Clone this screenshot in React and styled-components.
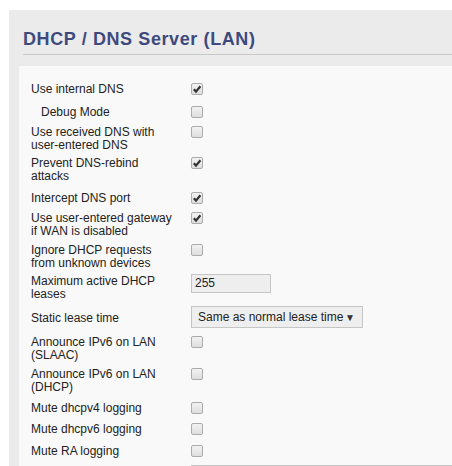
import React from 'react';
import styled, { createGlobalStyle } from 'styled-components';

const GlobalStyle = createGlobalStyle`
  body {
    margin: 0;
    background: #ffffff;
    font-family: "Liberation Sans", Arial, sans-serif;
  }
`;

const Page = styled.div`
  padding: 10px 0 0 9px;
  height: 456px;
  overflow: hidden;
`;

const Section = styled.div`
  background: #ebebeb;
  padding: 0 0 0 10px;
  min-height: 456px;
`;

const Heading = styled.h2`
  margin: 0 0 11px 4px;
  padding: 18px 0 4px 0;
  font-size: 18px;
  line-height: 22px;
  font-weight: bold;
  letter-spacing: 0.6px;
  color: #3e4a7e;
  border-bottom: 1px solid #c9c9c9;
`;

const Panel = styled.div`
  background: #f9f9f9;
  padding: 13px 0 0 12px;
  min-height: 400px;
`;

const Row = styled.div`
  display: grid;
  grid-template-columns: 160px 1fr;
  height: ${props => props.h}px;
`;

const Label = styled.div`
  padding: ${props => props.pad}px 0 0 ${props => props.indent ? 10 : 0}px;
  font-size: 12px;
  line-height: 13px;
  color: #222222;
`;

const Cell = styled.div`
  padding-top: ${props => props.pad}px;
`;

const Box = styled.span`
  display: block;
  width: 10px;
  height: 10px;
  border: 1px solid #acacac;
  border-radius: 2px;
  background: linear-gradient(#f2f2f2, #dedede);
  position: relative;
`;

const TextInput = styled.div`
  box-sizing: border-box;
  width: ${props => props.w}px;
  height: ${props => props.ht}px;
  border: 1px solid #c6c6c6;
  background: #eeeeee;
  padding: 0 0 0 3px;
  font-size: 12px;
  line-height: 17px;
  color: #222222;
`;

const Select = styled.div`
  box-sizing: border-box;
  width: 172px;
  height: 22px;
  border: 1px solid #c6c6c6;
  background: #eeeeee;
  display: flex;
  align-items: center;
  justify-content: space-between;
  padding: 0 7px 0 6px;
  font-size: 12px;
  color: #222222;
`;

const Arrow = styled.span`
  font-size: 10px;
  color: #333333;
`;

const Check = ({ on }) => (
  <Box>
    {on && (
      <svg width="10" height="10" viewBox="0 0 10 10" style={{ position: 'absolute', left: 0, top: 0 }}>
        <path d="M1.8 5.2 L4 7.6 L8.4 2.2" fill="none" stroke="#333" strokeWidth="2.2" />
      </svg>
    )}
  </Box>
);

const rows = [
  { lines: ['Use internal DNS'], h: 23, check: true },
  { lines: ['Debug Mode'], h: 20, check: false, indent: true },
  { lines: ['Use received DNS with', 'user-entered DNS'], h: 31, check: false },
  { lines: ['Prevent DNS-rebind', 'attacks'], h: 35, check: true },
  { lines: ['Intercept DNS port'], h: 20, check: true },
  { lines: ['Use user-entered gateway', 'if WAN is disabled'], h: 32, check: true },
  { lines: ['Ignore DHCP requests', 'from unknown devices'], h: 31, check: false },
  { lines: ['Maximum active DHCP', 'leases'], h: 35, input: '255' },
  { lines: ['Static lease time'], h: 26, select: 'Same as normal lease time' },
  { lines: ['Announce IPv6 on LAN', '(SLAAC)'], h: 32, check: false },
  { lines: ['Announce IPv6 on LAN', '(DHCP)'], h: 34, check: false },
  { lines: ['Mute dhcpv4 logging'], h: 21, check: false },
  { lines: ['Mute dhcpv6 logging'], h: 22, check: false },
  { lines: ['Mute RA logging'], h: 22, check: false },
  { lines: [''], h: 80, area: true },
];

const Control = ({ row }) => {
  if (row.input) {
    return <Cell pad={3}><TextInput w={80} ht={19}>{row.input}</TextInput></Cell>;
  }
  if (row.select) {
    return <Cell pad={0}><Select>{row.select}<Arrow>▼</Arrow></Select></Cell>;
  }
  if (row.area) {
    return <Cell pad={2}><TextInput w={300} ht={70} /></Cell>;
  }
  return <Cell pad={4}><Check on={row.check} /></Cell>;
};

export default function App() {
  return (
    <Page>
      <GlobalStyle />
      <Section>
        <Heading>DHCP / DNS Server (LAN)</Heading>
        <Panel>
          {rows.map((row, n) => (
            <Row key={n} h={row.h}>
              <Label pad={row.select ? 6 : 4} indent={row.indent}>
                {row.lines.map((line, i) => (
                  <React.Fragment key={i}>
                    {i > 0 && <br />}
                    {line}
                  </React.Fragment>
                ))}
              </Label>
              <Control row={row} />
            </Row>
          ))}
        </Panel>
      </Section>
    </Page>
  );
}
